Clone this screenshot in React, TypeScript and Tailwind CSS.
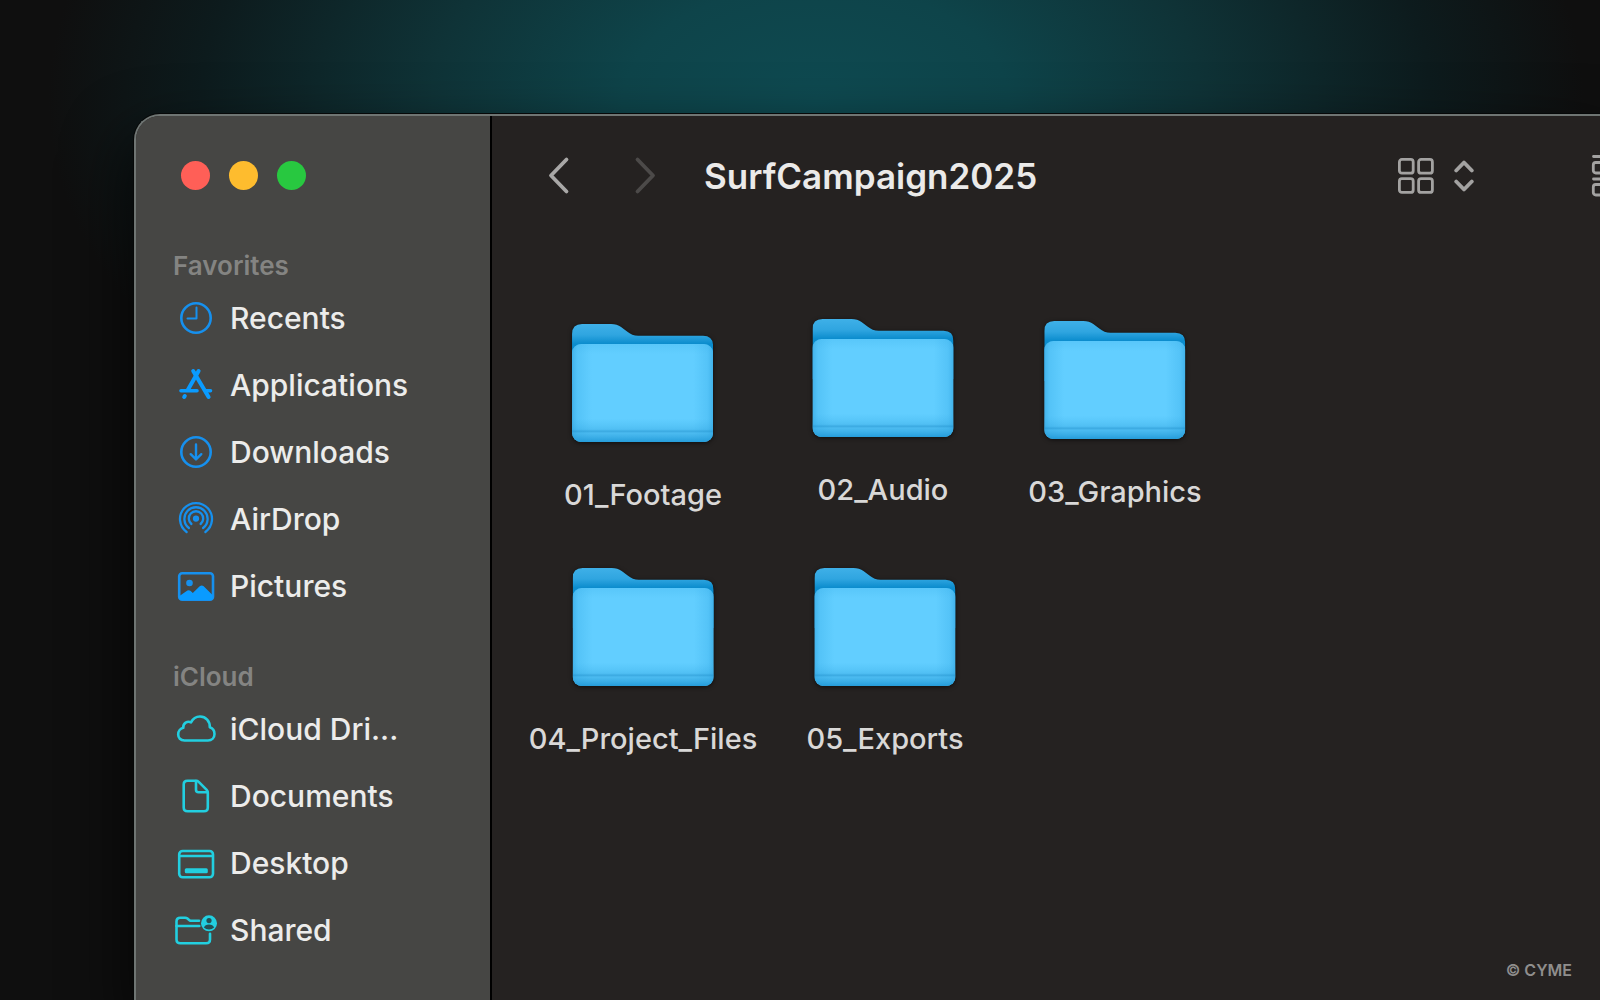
import type { ReactNode } from 'react';

interface SidebarItem {
  label: string;
  icon: ReactNode;
}

interface SidebarSection {
  title: string;
  color: string;
  items: SidebarItem[];
}

interface FolderItem {
  name: string;
  // centre and top of the icon on the window's canvas
  x: number;
  y: number;
}

const sections: SidebarSection[] = [
  {
    title: 'Favorites',
    color: 'text-[#1690ee]',
    items: [
      {
        label: 'Recents',
        icon: (
          <>
            <circle cx="23" cy="23" r="14.7" />
            <path d="M23.5 12.5v11h-9" strokeWidth="2" />
          </>
        ),
      },
      {
        label: 'Applications',
        icon: (
          <g strokeWidth="4" className="text-[#0a9bff]" stroke="currentColor">
            <path d="M25.6 9 14.8 28" />
            <path d="m20.2 9 15.4 26" />
            <path d="m11.8 34-.6 1" />
            <path d="M8 28.7H24" strokeWidth="3.6" />
            <path d="M33 28.7h4.5" strokeWidth="3.6" />
          </g>
        ),
      },
      {
        label: 'Downloads',
        icon: (
          <>
            <circle cx="23" cy="23" r="14.7" />
            <path d="M23 15.5v14.5M17.7 25.2l5.3 5.2 5.3-5.2" strokeWidth="2.4" />
          </>
        ),
      },
      {
        label: 'AirDrop',
        icon: (
          <g strokeWidth="2.3">
            <path d="M13.6 36A16 16 0 1 1 32.4 36" />
            <path d="M15.9 32A11.6 11.6 0 1 1 30.1 32" />
            <path d="M18.4 28A7.2 7.2 0 1 1 27.6 28" />
            <circle cx="23" cy="22.6" r="2" fill="currentColor" />
          </g>
        ),
      },
      {
        label: 'Pictures',
        icon: (
          <>
            <rect x="6.2" y="10.2" width="33.8" height="26.6" rx="3" />
            <circle cx="16.5" cy="20" r="3.3" fill="currentColor" stroke="none" />
            <path
              d="M6.5 33 14.4 27.6q1.6-1 3 .2l2.4 2.2 6.9-6.8q2-1.6 4 0L39.5 32v3.5q0 1.5-1.5 1.5H8q-1.5 0-1.5-1.5Z"
              fill="#0a9bff"
              stroke="none"
            />
          </>
        ),
      },
    ],
  },
  {
    title: 'iCloud',
    color: 'text-[#22cfe0]',
    items: [
      {
        label: 'iCloud Dri...',
        icon: (
          <path d="M11.5 34.5C7.5 34.5 5.2 31.8 5.2 28.4c0-3.4 2.3-6 5.1-6.6-.5-4.6 4.2-7.2 7.7-5.4 1.8-3.6 5-5.9 9-5.9 5.8 0 10 4.5 9.8 10.8 3 1 4.7 3.7 4.7 6.7 0 3.8-2.7 6.5-6.5 6.5Z" />
        ),
      },
      {
        label: 'Documents',
        icon: (
          <>
            <path d="M14.5 7.7H23q1.6 0 2.7 1.1l8 8q1.1 1.1 1.1 2.7v15q0 3.8-3.8 3.8H14.5q-3.8 0-3.8-3.8v-23q0-3.8 3.8-3.8Z" />
            <path d="M23 8v8.7q0 2.5 2.5 2.5h9" />
          </>
        ),
      },
      {
        label: 'Desktop',
        icon: (
          <>
            <rect x="6.2" y="11" width="33.8" height="26.3" rx="3.5" />
            <path d="M6.5 16h33" />
            <rect x="11.8" y="28.2" width="23" height="5" rx="1.5" fill="currentColor" stroke="none" />
          </>
        ),
      },
      {
        label: 'Shared',
        icon: (
          <>
            <path d="M26 13.8h-7.5q-1.3 0-2.4-.9l-1.6-1.3q-1.1-.9-2.4-.9H7.3q-3.8 0-3.8 3.8v18q0 3.8 3.8 3.8h25.9q3.8 0 3.8-3.8v-5.7" />
            <path d="M3.5 19h22.8" />
            <circle cx="36" cy="16.3" r="8" fill="currentColor" stroke="none" />
            <circle cx="36" cy="13.6" r="2.6" fill="#264f52" stroke="none" />
            <path d="M30.9 20.6q1.2-3 5.1-3t5.1 3Q39 22.6 36 22.6t-5.1-2Z" fill="#264f52" stroke="none" />
          </>
        ),
      },
    ],
  },
];

const folders: FolderItem[] = [
  { name: '01_Footage', x: 151, y: 208 },
  { name: '02_Audio', x: 391, y: 203 },
  { name: '03_Graphics', x: 623, y: 205 },
  { name: '04_Project_Files', x: 151, y: 452 },
  { name: '05_Exports', x: 393, y: 452 },
];

const lights = [
  { label: 'Close', color: 'bg-[#ff5f57]' },
  { label: 'Minimize', color: 'bg-[#febc2e]' },
  { label: 'Zoom', color: 'bg-[#28c840]' },
];

function FolderIcon() {
  return (
    <svg viewBox="0 0 141 119" className="h-[119px] w-[141px] drop-shadow-[0_1px_2px_rgba(0,0,0,0.6)]" aria-hidden="true">
      <path
        d="M0 10Q0 0 10 0H39Q45 0 49 3L55 7.6Q60 11.8 66 11.8H131Q141 11.8 141 22V60H0Z"
        fill="url(#folder-back)"
      />
      <rect y="20" width="141" height="98" rx="9" fill="#62ceff" />
      <rect y="20" width="141" height="98" rx="9" fill="url(#folder-sides)" />
      <rect y="20" width="141" height="98" rx="9" fill="url(#folder-front)" />
    </svg>
  );
}

function FolderGradients() {
  return (
    <svg className="absolute size-0" aria-hidden="true">
      <defs>
        <linearGradient id="folder-back" gradientUnits="userSpaceOnUse" x1="0" y1="0" x2="0" y2="22">
          <stop offset="0" stopColor="#3fb0e8" />
          <stop offset="0.5" stopColor="#2fa5e0" />
          <stop offset="0.9" stopColor="#0b8ccd" />
        </linearGradient>
        <linearGradient id="folder-sides">
          <stop offset="0" stopColor="#2b9fdc" stopOpacity="0.6" />
          <stop offset="0.04" stopColor="#3bb0ea" stopOpacity="0.35" />
          <stop offset="0.14" stopColor="#3bb0ea" stopOpacity="0" />
          <stop offset="0.86" stopColor="#3bb0ea" stopOpacity="0" />
          <stop offset="0.96" stopColor="#3bb0ea" stopOpacity="0.35" />
          <stop offset="1" stopColor="#2b9fdc" stopOpacity="0.6" />
        </linearGradient>
        <linearGradient id="folder-front" x1="0" y1="0" x2="0" y2="1">
          <stop offset="0" stopColor="#3bb0ea" stopOpacity="0.25" />
          <stop offset="0.1" stopColor="#3bb0ea" stopOpacity="0" />
          <stop offset="0.76" stopColor="#3bb0ea" stopOpacity="0" />
          <stop offset="0.87" stopColor="#2fa3de" stopOpacity="0.35" />
          <stop offset="0.89" stopColor="#2090cc" stopOpacity="0.6" />
          <stop offset="0.91" stopColor="#2fa3de" stopOpacity="0.45" />
          <stop offset="1" stopColor="#1f97d6" stopOpacity="0.9" />
        </linearGradient>
      </defs>
    </svg>
  );
}

function Sidebar() {
  return (
    <aside className="w-[356px] shrink-0 border-r-2 border-black bg-[#464644] pt-[45px] pl-[37px]">
      <div className="mb-[60px] flex gap-[19px] pl-2">
        {lights.map((light) => (
          <button key={light.label} aria-label={light.label} className={`size-[29px] rounded-full ${light.color}`} />
        ))}
      </div>

      <nav className="flex flex-col gap-[42px]">
        {sections.map((section) => (
          <section key={section.title}>
            <h2 className="mb-0.5 text-[26px] leading-8 font-semibold text-[#848482]">{section.title}</h2>
            <ul>
              {section.items.map((item) => (
                <li key={item.label}>
                  <a href="#" className="flex h-[67px] items-center gap-[11px]">
                    <svg
                      viewBox="0 0 46 46"
                      fill="none"
                      stroke="currentColor"
                      strokeWidth="2.6"
                      strokeLinecap="round"
                      strokeLinejoin="round"
                      className={`size-[46px] shrink-0 ${section.color}`}
                      aria-hidden="true"
                    >
                      {item.icon}
                    </svg>
                    <span className="text-[30px] leading-10 font-medium text-[#ececeb]">{item.label}</span>
                  </a>
                </li>
              ))}
            </ul>
          </section>
        ))}
      </nav>
    </aside>
  );
}

function Toolbar() {
  return (
    <header className="flex h-[120px] items-center pl-[54px]">
      <button aria-label="Back">
        <svg viewBox="0 0 24 40" className="h-10 w-6" fill="none" stroke="#a9a8a7" strokeWidth="3.8" strokeLinecap="round" strokeLinejoin="round">
          <path d="M20.5 3.5 5 19.5l15.5 16" />
        </svg>
      </button>
      <button aria-label="Forward" disabled className="ml-16">
        <svg viewBox="0 0 24 40" className="h-10 w-6" fill="none" stroke="#4c4a49" strokeWidth="3.8" strokeLinecap="round" strokeLinejoin="round">
          <path d="M3.5 3.5 19 19.5l-15.5 16" />
        </svg>
      </button>
      <h1 className="ml-[46px] text-[35px] leading-[44px] font-semibold text-[#ebeae9]">SurfCampaign2025</h1>

      <div className="ml-auto -mr-8 flex items-center">
        <button aria-label="Icon view" className="flex items-center gap-5">
          <svg viewBox="0 0 36 36" className="size-9" fill="none" stroke="#a3a2a1" strokeWidth="2.8">
            <rect x="1.4" y="1.4" width="13.8" height="13.8" rx="2.5" />
            <rect x="20.6" y="1.4" width="13.8" height="13.8" rx="2.5" />
            <rect x="1.4" y="20.6" width="13.8" height="13.8" rx="2.5" />
            <rect x="20.6" y="20.6" width="13.8" height="13.8" rx="2.5" />
          </svg>
          <svg viewBox="0 0 20 32" className="h-8 w-5" fill="none" stroke="#a3a2a1" strokeWidth="3.8" strokeLinecap="round" strokeLinejoin="round">
            <path d="m2.2 10.5 7.8-8 7.8 8M2.200 21.500l7.800 8 7.800-8" />
          </svg>
        </button>
        <button aria-label="Group items" className="ml-[117px]">
          <svg viewBox="0 0 41 42" className="h-[42px] w-[41px]" fill="none" stroke="#a3a2a1" strokeWidth="2.8" strokeLinecap="round">
            <path d="M2.5 1.500h35M2.500 24h35" />
            <rect x="2.3" y="7.5" width="9" height="10.500" rx="2.500" />
            <rect x="15.3" y="7.5" width="9" height="10.500" rx="2.500" />
            <rect x="28.3" y="7.5" width="9" height="10.500" rx="2.500" />
            <rect x="2.3" y="29.5" width="9" height="10.500" rx="2.500" />
            <rect x="15.3" y="29.5" width="9" height="10.500" rx="2.500" />
            <rect x="28.3" y="29.5" width="9" height="10.500" rx="2.500" />
          </svg>
        </button>
      </div>
    </header>
  );
}

export default function App() {
  return (
    <div className="relative flex min-h-screen flex-col overflow-hidden bg-[#0f0f0f] bg-[radial-gradient(ellipse_48%_46%_at_51%_10%,#0e4a51_0%,#0e444a_25%,#0f3337_50%,#0d1b1d_80%,#0f0f0f_100%)] pt-[114px] pl-[134px] font-['Inter',sans-serif]">
      <FolderGradients />
      <div className="flex flex-1 overflow-hidden rounded-tl-[26px] border-t-2 border-l-2 border-[#6f7573] bg-[#252221] shadow-[0_0_0_1px_#060808,0_30px_60px_10px_rgba(0,0,0,0.6)]">
        <Sidebar />
        <main className="relative min-w-0 flex-1">
          <Toolbar />
          {folders.map((folder) => (
            <button
              key={folder.name}
              className="absolute flex -translate-x-1/2 flex-col items-center gap-9"
              style={{ left: folder.x, top: folder.y }}
            >
              <FolderIcon />
              <span className="text-[29px] leading-8 font-medium whitespace-nowrap text-[#d9d8d7]">{folder.name}</span>
            </button>
          ))}
        </main>
      </div>
      <p className="absolute right-7 bottom-5 text-base leading-5 font-semibold text-[#8f8e8d]">© CYME</p>
    </div>
  );
}
